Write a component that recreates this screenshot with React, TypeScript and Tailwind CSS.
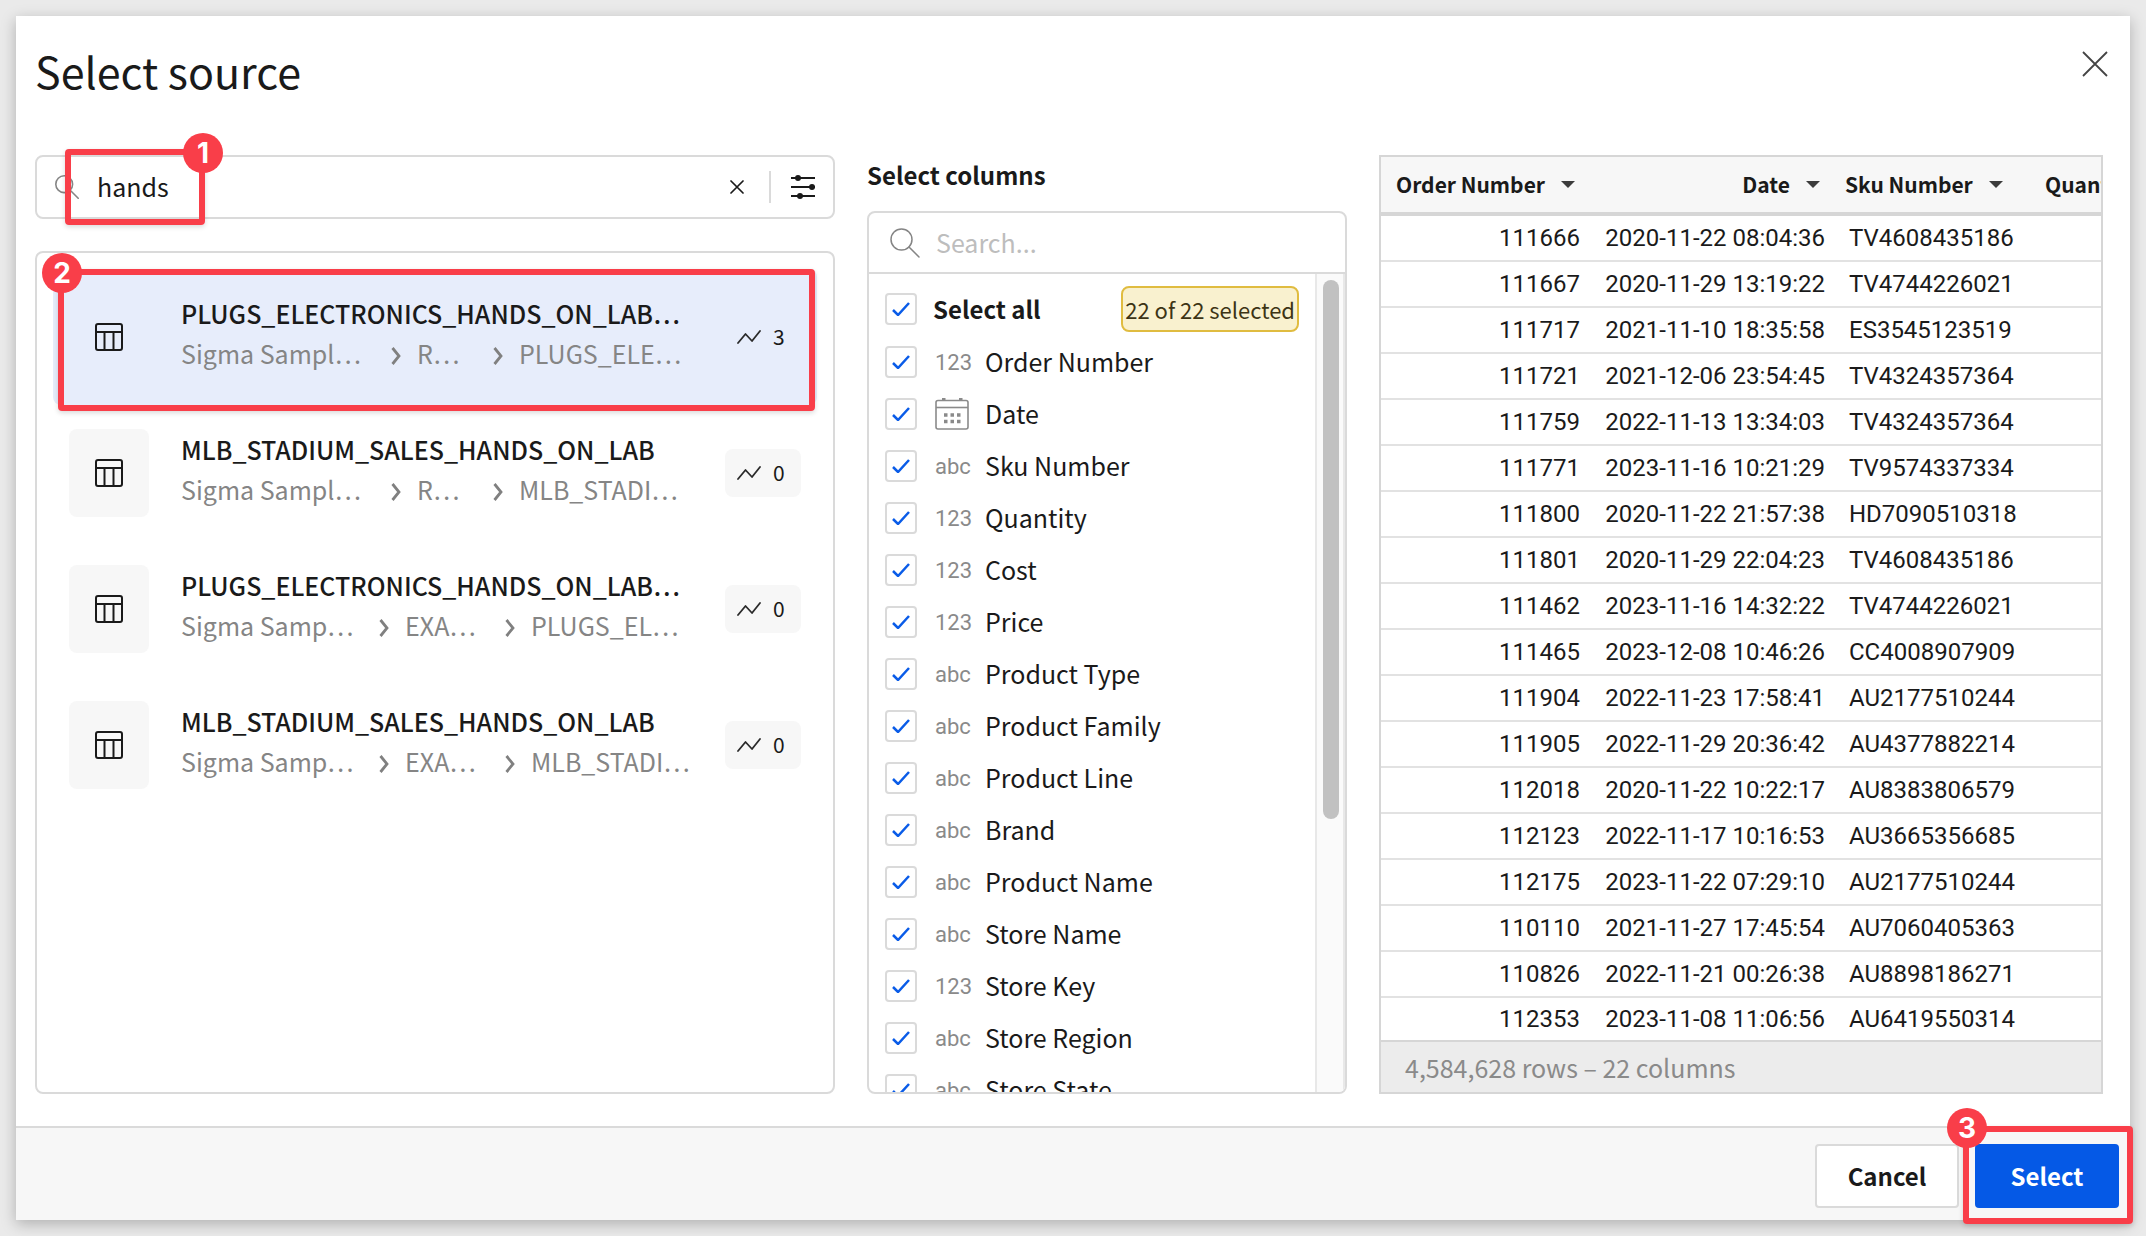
import { useId, type ReactNode } from 'react';

const sources = [
  { name: 'PLUGS_ELECTRONICS_HANDS_ON_LAB…', path: ['Sigma Sampl…', 'R…', 'PLUGS_ELE…'], widths: 'grid-cols-[210px_102px_auto]', uses: 3, active: true },
  { name: 'MLB_STADIUM_SALES_HANDS_ON_LAB', path: ['Sigma Sampl…', 'R…', 'MLB_STADI…'], widths: 'grid-cols-[210px_102px_auto]', uses: 0, active: false },
  { name: 'PLUGS_ELECTRONICS_HANDS_ON_LAB…', path: ['Sigma Samp…', 'EXA…', 'PLUGS_EL…'], widths: 'grid-cols-[198px_126px_auto]', uses: 0, active: false },
  { name: 'MLB_STADIUM_SALES_HANDS_ON_LAB', path: ['Sigma Samp…', 'EXA…', 'MLB_STADI…'], widths: 'grid-cols-[198px_126px_auto]', uses: 0, active: false },
];

const columns: [string, string][] = [
  ['123', 'Order Number'],
  ['date', 'Date'],
  ['abc', 'Sku Number'],
  ['123', 'Quantity'],
  ['123', 'Cost'],
  ['123', 'Price'],
  ['abc', 'Product Type'],
  ['abc', 'Product Family'],
  ['abc', 'Product Line'],
  ['abc', 'Brand'],
  ['abc', 'Product Name'],
  ['abc', 'Store Name'],
  ['123', 'Store Key'],
  ['abc', 'Store Region'],
  ['abc', 'Store State'],
];

const rows = [
  ['111666', '2020-11-22 08:04:36', 'TV4608435186'],
  ['111667', '2020-11-29 13:19:22', 'TV4744226021'],
  ['111717', '2021-11-10 18:35:58', 'ES3545123519'],
  ['111721', '2021-12-06 23:54:45', 'TV4324357364'],
  ['111759', '2022-11-13 13:34:03', 'TV4324357364'],
  ['111771', '2023-11-16 10:21:29', 'TV9574337334'],
  ['111800', '2020-11-22 21:57:38', 'HD7090510318'],
  ['111801', '2020-11-29 22:04:23', 'TV4608435186'],
  ['111462', '2023-11-16 14:32:22', 'TV4744226021'],
  ['111465', '2023-12-08 10:46:26', 'CC4008907909'],
  ['111904', '2022-11-23 17:58:41', 'AU2177510244'],
  ['111905', '2022-11-29 20:36:42', 'AU4377882214'],
  ['112018', '2020-11-22 10:22:17', 'AU8383806579'],
  ['112123', '2022-11-17 10:16:53', 'AU3665356685'],
  ['112175', '2023-11-22 07:29:10', 'AU2177510244'],
  ['110110', '2021-11-27 17:45:54', 'AU7060405363'],
  ['110826', '2022-11-21 00:26:38', 'AU8898186271'],
  ['112353', '2023-11-08 11:06:56', 'AU6419550314'],
];

function SearchIcon({ className }: { className: string }) {
  return (
    <svg viewBox="0 0 30 30" className={className} fill="none" stroke="#858585" strokeLinecap="round" aria-hidden="true">
      <circle cx="11.5" cy="11.5" r="10.5" />
      <path d="M19 19l10 10" />
    </svg>
  );
}

function TableIcon() {
  return (
    <svg viewBox="0 0 28 28" className="size-7" fill="none" stroke="#1a1a1a" strokeWidth="2" aria-hidden="true">
      <rect x="1" y="1" width="26" height="26" rx="2" />
      <path d="M1 9h26M9.5 9v18M18.5 9v18" />
    </svg>
  );
}

function TrendIcon() {
  return (
    <svg viewBox="0 0 24 14" className="h-3.5 w-6" fill="none" stroke="#2a2a2a" strokeWidth="1.8" strokeLinejoin="round" strokeLinecap="round" aria-hidden="true">
      <path d="M1 13L8.500 4L15 11L23 1" />
    </svg>
  );
}

function Chevron() {
  return (
    <svg viewBox="0 0 10 18" className="mt-1.5 h-[18px] w-2.5 shrink-0" fill="none" stroke="#808080" strokeWidth="2.8" aria-hidden="true">
      <path d="M1.500 1L8 9L1.500 17" />
    </svg>
  );
}

function CalendarIcon() {
  return (
    <svg viewBox="0 0 34 32" className="h-8 w-[34px]" fill="none" stroke="#8a8a8a" strokeWidth="1.6" aria-hidden="true">
      <rect x="1" y="2.5" width="32" height="28.5" rx="2" />
      <path d="M1 9.500h32" />
      <path d="M7 1.500h3.500M24 1.500h3.500" strokeWidth="3" />
      <path d="M9 17h3.500M15.500 17h3.500M22 17h3.500M9 23.500h3.500M15.500 23.500h3.500M22 23.500h3.500" strokeWidth="3.5" />
    </svg>
  );
}

function Caret() {
  return (
    <svg viewBox="0 0 14 7" className="h-[7px] w-3.5 shrink-0" aria-hidden="true">
      <path d="M0 0h14L7 7z" fill="#3c3c3c" />
    </svg>
  );
}

function Marker({ n, frame, badge }: { n: number; frame: string; badge: string }) {
  return (
    <div className={`pointer-events-none absolute z-10 rounded-sm border-6 border-[#f93e49] shadow-[0_2px_5px_rgba(0,0,0,0.15)] ${frame}`}>
      <span className={`absolute grid size-10 place-items-center rounded-full bg-[#f93e49] font-[Inter,sans-serif] text-[28px] leading-none font-bold text-white ${badge}`}>
        {n}
      </span>
    </div>
  );
}

function CheckRow({ children, className }: { children: ReactNode; className: string }) {
  const id = useId();
  return (
    <div className={`flex shrink-0 items-center ${className}`}>
      <span className="grid size-8 shrink-0 place-items-center">
        <input id={id} type="checkbox" defaultChecked className="peer col-start-1 row-start-1 size-8 appearance-none rounded-sm border-2 border-[#dadada] bg-white" />
        <svg viewBox="0 0 18 14" className="pointer-events-none invisible col-start-1 row-start-1 h-3.5 w-[18px] peer-checked:visible" fill="none" stroke="#0a5ce8" strokeWidth="2.5" aria-hidden="true">
          <path d="M1 8l5 5L17 1" />
        </svg>
      </span>
      <label htmlFor={id} className="flex flex-1 items-center">{children}</label>
    </div>
  );
}

export default function App() {
  return (
    <div className="flex min-h-screen bg-[#eaeaea] p-4 font-['Noto_Sans_CJK_SC',sans-serif] text-[#1a1a1a]">
      <main role="dialog" aria-labelledby="title" className="flex min-w-0 flex-1 flex-col bg-white shadow-[0_4px_14px_rgba(0,0,0,0.25)]">
        <header className="flex items-start justify-between px-[19px] pt-7">
          <h1 id="title" className="text-[43px] leading-[53px]">Select source</h1>
          <button type="button" aria-label="Close" className="mt-1 grid size-8 place-items-center">
            <svg viewBox="0 0 26 26" className="size-[26px]" stroke="#444" strokeWidth="1.8" aria-hidden="true"><path d="M1 1l24 24M25 1L1 25" /></svg>
          </button>
        </header>

        <div className="flex flex-1 gap-8 pt-[58px] pr-[27px] pl-[19px]">
          <section className="flex min-w-0 flex-[800] flex-col gap-8">
            <div className="relative flex h-16 items-center rounded-lg border-2 border-[#dadada] px-[18px]">
              <SearchIcon className="size-6 stroke-2" />
              <input aria-label="Search sources" defaultValue="hands" className="ml-[18px] min-w-0 flex-1 pb-0.5 text-[25px] leading-8 outline-none" />
              <button type="button" aria-label="Clear search" className="grid size-8 place-items-center">
                <svg viewBox="0 0 14 14" className="size-3.5" stroke="#1a1a1a" strokeWidth="1.7" strokeLinecap="round" aria-hidden="true"><path d="M1 1l12 12M13 1L1 13" /></svg>
              </button>
              <span className="mr-5 ml-4 h-8 w-0.5 bg-[#dadada]" />
              <button type="button" aria-label="Filters" className="grid h-8 w-6 place-items-center">
                <svg viewBox="0 0 24 24" className="size-6" stroke="#1a1a1a" strokeWidth="2" aria-hidden="true">
                  <path d="M0 3h24M0 12h24M0 21h24" />
                  <g fill="#1a1a1a" stroke="none"><circle cx="7" cy="3" r="3" /><circle cx="21" cy="12" r="3" /><circle cx="9" cy="21" r="3" /></g>
                </svg>
              </button>
              <Marker n={1} frame="-top-2 left-7 h-[76px] w-[140px]" badge="-top-[22px] -right-6" />
            </div>

            <ul className="flex flex-1 flex-col rounded-lg border-2 border-[#dadada] px-4 pt-4">
              {sources.map((s, i) => (
                <li key={i} className="relative">
                  <button type="button" className={`flex h-[136px] w-full items-center rounded-lg px-4 text-left ${s.active ? 'bg-[#e7edfb]' : ''}`}>
                    <span className={`grid h-[88px] w-20 shrink-0 place-items-center rounded-lg ${s.active ? '' : 'bg-[#f7f7f7]'}`}><TableIcon /></span>
                    <span className="ml-8 min-w-0 flex-1 pb-2">
                      <span className="block text-[25px] leading-10 font-medium whitespace-nowrap">{s.name}</span>
                      <span className={`grid text-[25px] leading-10 whitespace-nowrap text-[#858585] ${s.widths}`}>
                        <span>{s.path[0]}</span>
                        <span className="flex items-center gap-4"><Chevron />{s.path[1]}</span>
                        <span className="flex items-center gap-4"><Chevron />{s.path[2]}</span>
                      </span>
                    </span>
                    <span className={`flex h-12 w-[76px] shrink-0 items-center gap-3 rounded-lg px-3 text-[21px] ${s.active ? '' : 'bg-[#f7f7f7]'}`}><TrendIcon />{s.uses}</span>
                  </button>
                  {s.active && <Marker n={2} frame="top-0 right-0.5 left-[5px] h-[142px]" badge="-top-[22px] -left-[22px]" />}
                </li>
              ))}
            </ul>
          </section>

          <section className="flex min-w-0 flex-[480] flex-col">
            <h2 className="text-2xl leading-10 font-bold">Select columns</h2>
            <div className="mt-4 flex flex-1 flex-col overflow-hidden rounded-lg border-2 border-[#dadada]">
              <div className="flex h-[61px] shrink-0 items-center border-b-2 border-[#dadada] pl-[21px]">
                <SearchIcon className="size-[30px] stroke-[1.5]" />
                <input aria-label="Search columns" placeholder="Search..." className="ml-4 min-w-0 flex-1 pb-0.5 text-[25px] leading-8 outline-none placeholder:text-[#bdbdbd]" />
              </div>
              <div className="flex h-0 grow">
                <div className="flex flex-1 flex-col overflow-hidden pt-2 pl-4">
                  <CheckRow className="h-[54px]">
                    <span className="ml-4 flex-1 text-2xl font-bold">Select all</span>
                    <span className="mr-4 flex h-[46px] items-center rounded-lg border-2 border-[#e0bc40] bg-[#f9f1cf] px-0.5 text-[22px] text-[#3d3415]">22 of 22 selected</span>
                  </CheckRow>
                  {columns.map(([type, name]) => (
                    <CheckRow key={name} className="h-[52px]">
                      <span className="ml-[18px] flex w-9 items-center font-[Roboto,sans-serif] text-[22px] text-[#8a8a8a]">{type === 'date' ? <CalendarIcon /> : type}</span>
                      <span className="ml-3.5 text-[25px]">{name}</span>
                    </CheckRow>
                  ))}
                </div>
                <div className="w-[30px] shrink-0 border-x-2 border-[#e8e8e8] bg-[#fafafa] pt-1.5 pr-1 pl-1.5">
                  <div className="h-[539px] rounded-full bg-[#c1c1c1]" />
                </div>
              </div>
            </div>
          </section>

          <section className="flex min-w-0 flex-[724]">
            <div className="flex min-w-0 flex-1 flex-col overflow-hidden border-2 border-[#d6d6d6]">
              <table className="w-full table-fixed border-separate border-spacing-0">
                <colgroup>
                  <col className="w-[211px]" />
                  <col className="w-[245px]" />
                  <col className="w-[192px]" />
                  <col />
                </colgroup>
                <thead className="bg-[#f7f7f7] text-[21px] whitespace-nowrap">
                  <tr className="h-[59px]">
                    <th className="border-b-4 border-[#d6d6d6] p-0 font-bold"><span className="flex items-center justify-end gap-4 pr-[17px]">Order Number<Caret /></span></th>
                    <th className="border-b-4 border-[#d6d6d6] p-0 font-bold"><span className="flex items-center justify-end gap-4 pr-[17px]">Date<Caret /></span></th>
                    <th className="border-b-4 border-[#d6d6d6] p-0 font-bold"><span className="flex items-center gap-4 pl-2">Sku Number<Caret /></span></th>
                    <th className="overflow-hidden border-b-4 border-[#d6d6d6] p-0 pl-4 text-left font-bold">Quantity</th>
                  </tr>
                </thead>
                <tbody className="font-[Roboto,sans-serif] text-2xl">
                  {rows.map(([order, date, sku], i) => {
                    const cell = i < rows.length - 1 ? 'h-[46px] border-b-2 border-[#e2e2e2] px-3 py-0' : 'h-[42px] px-3 py-0';
                    return (
                      <tr key={order}>
                        <td className={`${cell} text-right`}>{order}</td>
                        <td className={`${cell} text-right whitespace-nowrap`}>{date}</td>
                        <td className={cell}>{sku}</td>
                        <td className={cell} />
                      </tr>
                    );
                  })}
                </tbody>
              </table>
              <div className="flex min-h-[51px] flex-1 items-center border-t-2 border-[#d6d6d6] bg-[#ececec] pl-6 text-[25px] leading-8 text-[#8a8a8a]">4,584,628 rows – 22 columns</div>
            </div>
          </section>
        </div>

        <footer className="mt-8 flex h-[94px] items-start justify-end gap-4 border-t-2 border-[#dadada] bg-[#f7f7f7] pt-4 pr-[11px]">
          <button type="button" className="h-16 w-36 rounded-sm border-2 border-[#dadada] bg-white text-2xl font-bold">Cancel</button>
          <div className="relative flex">
            <button type="button" className="h-16 w-36 rounded-sm bg-[#0559e6] text-2xl font-bold text-white">Select</button>
            <Marker n={3} frame="-top-[18px] -right-3.5 -bottom-4 -left-3" badge="-top-6 -left-[22px]" />
          </div>
        </footer>
      </main>
    </div>
  );
}
